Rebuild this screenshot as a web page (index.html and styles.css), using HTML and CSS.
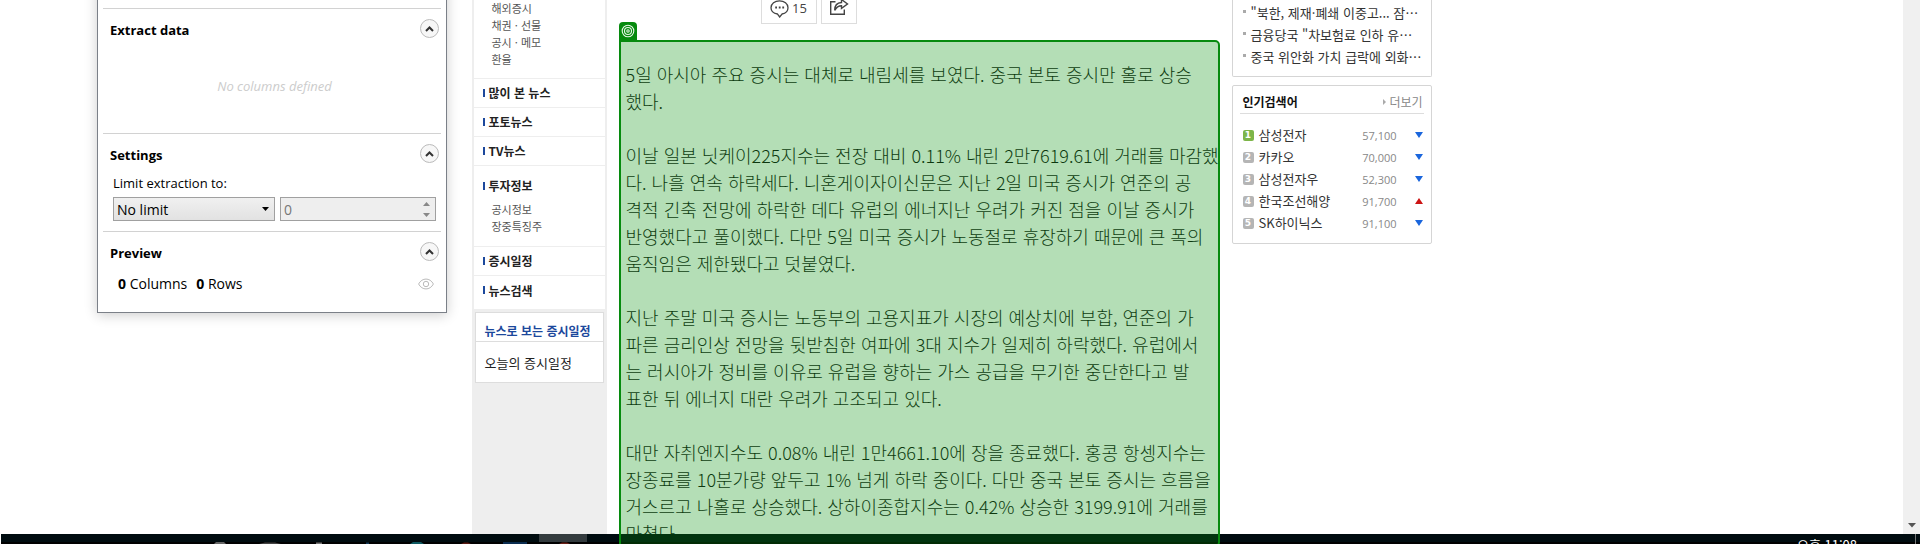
FILE: index.html
```html
<!DOCTYPE html>
<html lang="ko">
<head>
<meta charset="utf-8">
<title>증시 뉴스</title>
<link rel="stylesheet" href="styles.css">
</head>
<body>
<div class="desktop">
  <main class="browser">
    <div class="page">
      <nav class="side">
        <div class="menu">
          <ul class="sub first">
            <li><a href="#">해외증시</a></li>
            <li><a href="#">채권 · 선물</a></li>
            <li><a href="#">공시 · 메모</a></li>
            <li><a href="#">환율</a></li>
          </ul>
          <a class="head" href="#">많이 본 뉴스</a>
          <a class="head" href="#">포토뉴스</a>
          <a class="head" href="#">TV뉴스</a>
          <div class="group">
            <a class="head" href="#">투자정보</a>
            <ul class="sub">
              <li><a href="#">공시정보</a></li>
              <li><a href="#">장중특징주</a></li>
            </ul>
          </div>
          <a class="head" href="#">증시일정</a>
          <a class="head last" href="#">뉴스검색</a>
        </div>
        <section class="schedule">
          <h2>뉴스로 보는 증시일정</h2>
          <a href="#">오늘의 증시일정</a>
        </section>
      </nav>

      <div class="center">
        <div class="tools">
          <button class="tool comment" type="button" aria-label="댓글 15">
            <svg width="20" height="18" viewBox="0 0 20 18" fill="none" stroke="#444" stroke-width="1.3"><path d="M7.5 14 C3.500 13.300 1 11 1 7.700 C1 3.800 4.800 .8 9.500 .8 C14.200 .8 18 3.800 18 7.700 C18 11 15.500 13.300 12 14 L9.700 17 Z"/><path d="M5.200 7.500h1.800M8.800 7.500h1.800M12.300 7.500h1.800" stroke-width="1.800"/></svg>
            <span>15</span>
          </button>
          <button class="tool share" type="button" aria-label="공유">
            <svg width="20" height="19" viewBox="0 0 20 19" fill="none" stroke="#444" stroke-width="1.400"><path d="M6.500 4.700H1.700V17.300H15.300V12.500"/><path d="M5.700 13.300C5.700 8.500 8.200 5.700 12.500 5.500V2.500L18.500 7L12.500 11.300V8.700C9.500 8.700 7.500 10 5.700 13.300Z"/></svg>
          </button>
        </div>
        <article class="article">
          <p>5일 아시아 주요 증시는 대체로 내림세를 보였다. 중국 본토 증시만 홀로 상승<br>했다.</p>
          <p>이날 일본 닛케이225지수는 전장 대비 0.11% 내린 2만7619.61에 거래를 마감했<br>다. 나흘 연속 하락세다. 니혼게이자이신문은 지난 2일 미국 증시가 연준의 공<br>격적 긴축 전망에 하락한 데다 유럽의 에너지난 우려가 커진 점을 이날 증시가<br>반영했다고 풀이했다. 다만 5일 미국 증시가 노동절로 휴장하기 때문에 큰 폭의<br>움직임은 제한됐다고 덧붙였다.</p>
          <p>지난 주말 미국 증시는 노동부의 고용지표가 시장의 예상치에 부합, 연준의 가<br>파른 금리인상 전망을 뒷받침한 여파에 3대 지수가 일제히 하락했다. 유럽에서<br>는 러시아가 정비를 이유로 유럽을 향하는 가스 공급을 무기한 중단한다고 발<br>표한 뒤 에너지 대란 우려가 고조되고 있다.</p>
          <p>대만 자취엔지수도 0.08% 내린 1만4661.10에 장을 종료했다. 홍콩 항셍지수는<br>장종료를 10분가량 앞두고 1% 넘게 하락 중이다. 다만 중국 본토 증시는 흐름을<br>거스르고 나홀로 상승했다. 상하이종합지수는 0.42% 상승한 3199.91에 거래를<br>마쳤다.</p>
          <div class="highlight">
            <span class="tag"><svg width="14" height="14" viewBox="0 0 14 14" fill="none" stroke="#e8f6e8" stroke-width="1.100"><circle cx="7" cy="7" r="5.800"/><circle cx="7" cy="7" r="3.500"/><circle cx="7" cy="7" r="1.200"/></svg></span>
          </div>
        </article>
      </div>

      <aside class="right">
        <ul class="box news">
          <li><a href="#">"북한, 제재·폐쇄 이중고... 잠…</a></li>
          <li><a href="#">금융당국 "차보험료 인하 유…</a></li>
          <li><a href="#">중국 위안화 가치 급락에 외화…</a></li>
        </ul>
        <section class="box rank">
          <header><h2>인기검색어</h2><a href="#">더보기</a></header>
          <table>
            <tr><td><span class="no top">1</span></td><td class="name">삼성전자</td><td class="price">57,100</td><td><i class="down"></i></td></tr>
            <tr><td><span class="no">2</span></td><td class="name">카카오</td><td class="price">70,000</td><td><i class="down"></i></td></tr>
            <tr><td><span class="no">3</span></td><td class="name">삼성전자우</td><td class="price">52,300</td><td><i class="down"></i></td></tr>
            <tr><td><span class="no">4</span></td><td class="name">한국조선해양</td><td class="price">91,700</td><td><i class="up"></i></td></tr>
            <tr><td><span class="no">5</span></td><td class="name">SK하이닉스</td><td class="price">91,100</td><td><i class="down"></i></td></tr>
          </table>
        </section>
      </aside>
    </div>
    <div class="scrollbar"><svg width="8" height="5" viewBox="0 0 8 5"><path d="M0 0H8L4 4.500Z" fill="#555"/></svg></div>
  </main>

  <section class="dialog">
    <div class="panel extract">
      <header><h2>Extract data</h2><button class="fold" type="button" aria-label="Collapse Extract data"><svg width="9" height="6" viewBox="0 0 9 6"><path d="M1 5L4.500 1.500L8 5" fill="none" stroke="#333" stroke-width="2"/></svg></button></header>
      <p class="empty">No columns defined</p>
    </div>
    <div class="panel settings">
      <header><h2>Settings</h2><button class="fold" type="button" aria-label="Collapse Settings"><svg width="9" height="6" viewBox="0 0 9 6"><path d="M1 5L4.500 1.500L8 5" fill="none" stroke="#333" stroke-width="2"/></svg></button></header>
      <label for="limit">Limit extraction to:</label>
      <div class="fields">
        <div class="select"><select id="limit"><option>No limit</option></select><svg width="7" height="4" viewBox="0 0 7 4"><path d="M0 0H7L3.500 4Z" fill="#000"/></svg></div>
        <div class="spin"><input type="text" value="0" aria-label="Limit value" disabled><svg width="7" height="15" viewBox="0 0 7 15" fill="#888"><path d="M0 4L3.500 0L7 4ZM0 11H7L3.500 15Z"/></svg></div>
      </div>
    </div>
    <div class="panel preview">
      <header><h2>Preview</h2><button class="fold" type="button" aria-label="Collapse Preview"><svg width="9" height="6" viewBox="0 0 9 6"><path d="M1 5L4.500 1.500L8 5" fill="none" stroke="#333" stroke-width="2"/></svg></button></header>
      <div class="counts"><span><b>0</b> Columns</span><span><b>0</b> Rows</span>
        <svg class="eye" width="16" height="12" viewBox="0 0 16 12" fill="none" stroke="#bbb"><path d="M.6 6C4-.6 12-.6 15.400 6C12 12.600 4 12.600 .6 6Z"/><circle cx="8" cy="6" r="2.700"/></svg>
      </div>
    </div>
  </section>

  <footer class="taskbar">
    <svg class="apps" width="620" height="10" viewBox="0 0 620 10">
      <path d="M538 0H586V8H538Z" fill="#333b3e"/>
      <path d="M213 10L215 8H223L225 10Z" fill="#666"/>
      <path d="M258 10L264 8.500H274L280 10Z" fill="#444"/>
      <path d="M315 10V8.500H321V10Z" fill="#777"/>
      <path d="M365 10V8.500H368V10Z" fill="#123a5a"/>
      <path d="M409 10L412 8H420L423 10Z" fill="#0e5a62"/>
      <path d="M460 10L463 8.500H467L470 10Z" fill="#5a1a14"/>
      <path d="M502 8H526V10H502Z" fill="#0a2c50"/>
      <path d="M558 10L561 8.500H566L569 10Z" fill="#6a2018"/>
    </svg>
    <time>오후 11:08</time>
  </footer>
</div>
</body>
</html>
```
FILE: styles.css
```css
* { box-sizing: border-box; }
body {
  margin: 0;
  background: #fff;
  font-family: "Liberation Sans", "Noto Sans CJK KR", sans-serif;
}
h2, p, ul { margin: 0; padding: 0; }
ul { list-style: none; }
a { color: inherit; text-decoration: none; }
button { padding: 0; font: inherit; cursor: pointer; }
svg { display: block; flex: none; }

.desktop { position: relative; height: 100vh; overflow: hidden; }
.browser { display: flex; height: 100%; padding-bottom: 10px; }
.page {
  display: grid;
  grid-template-columns: 135px 601px 200px;
  column-gap: 12px;
  width: 960px;
  margin: 0 auto;
}
.scrollbar {
  display: flex;
  align-items: flex-end;
  justify-content: center;
  width: 17px;
  padding-bottom: 6px;
  background: #f0f0f0;
}

/* left menu */
.side {
  padding: 0 2px;
  background: #eee;
  color: #222;
  font-family: "Noto Sans CJK KR", sans-serif;
}
.menu { background: #fff; }
.sub { padding: 0 0 11px 18px; color: #555; font-size: 11px; line-height: 17px; }
.sub.first { padding-bottom: 10px; }
.head {
  display: flex;
  align-items: center;
  gap: 4px;
  height: 29px;
  padding: 0 0 1px 9px;
  border-top: 1px solid #eee;
  font-size: 12px;
  font-weight: 700;
}
.head::before { content: ""; width: 2px; height: 8px; background: #1c489c; }
.head.last { height: 34px; padding-bottom: 5px; }
.group { border-top: 1px solid #eee; padding-top: 5px; }
.group .head { height: 30px; border-top: 0; }
.schedule {
  margin: 3px 1px 0;
  border: 1px solid #ddd;
  background: #fff;
  font-size: 12px;
}
.schedule h2 {
  padding: 7px 9px 0;
  border-bottom: 1px solid #ddd;
  color: #1c489c;
  font-size: 12px;
  line-height: 21px;
  white-space: nowrap;
}
.schedule a { display: block; padding: 2px 9px 0; font-size: 13px; line-height: 38px; }

/* article */
.tools { display: flex; gap: 4px; height: 24px; margin-left: 142px; }
.tool {
  display: flex;
  justify-content: center;
  gap: 2px;
  height: 24px;
  border: 1px solid #ddd;
  border-top: 0;
  background: #fff;
  color: #444;
  font-family: "Open Sans", sans-serif;
  font-size: 13px;
  line-height: 16px;
}
.tool.comment { width: 56px; }
.tool.share { width: 36px; }
.tool.share svg { margin-top: -3px; }
.article {
  position: relative;
  margin-top: 16px;
  padding: 21px 7px 0;
  color: #111;
  font-family: "Liberation Sans Narrow", "Noto Sans CJK KR", sans-serif;
  font-size: 18px;
  font-weight: 300;
  line-height: 27px;
  white-space: nowrap;
}
.article p { margin-bottom: 27px; }
.highlight {
  position: absolute;
  inset: 0;
  z-index: 3;
  border: 2px solid #068a0e;
  border-radius: 0 5px 5px 0;
  background: rgba(5, 145, 12, .3);
}
.tag {
  position: absolute;
  left: -2px;
  top: -20px;
  display: grid;
  place-items: center;
  width: 18px;
  height: 18px;
  border-radius: 4px 4px 0 0;
  background: #068a0e;
}

/* right column */
.box { border: 1px solid #d5d5d5; border-radius: 2px; background: #fff; }
.right { color: #333; font-family: "Noto Sans CJK KR", sans-serif; font-size: 13px; }
.news { height: 77px; border-top: 0; border-radius: 0 0 2px 2px; padding: 2px 8px 0 10px; white-space: nowrap; }
.news li { display: flex; gap: 5px; line-height: 22px; }
.news li::before { content: ""; width: 3px; height: 3px; margin-top: 8px; background: #aaa; }
.rank { margin-top: 8px; padding: 0 7px 9px; }
.rank header {
  display: flex;
  align-items: center;
  justify-content: space-between;
  height: 28px;
  padding: 4px 1px 0 3px;
  border-bottom: 1px solid #ddd;
}
.rank h2 { color: #111; font-size: 12px; }
.rank header a { display: flex; align-items: center; gap: 3px; color: #888; font-size: 12px; }
.rank header a::before { content: ""; border: 3px solid transparent; border-left-color: #aaa; border-right: 0; }
.rank table { width: 100%; margin-top: 10px; border-collapse: collapse; }
.rank td { height: 22px; padding: 0; line-height: 20px; vertical-align: middle; }
.rank td:first-child { width: 19px; padding-left: 3px; }
.rank td:last-child { width: 27px; padding-left: 18px; }
.rank .price { padding-top: 2px; color: #888; font-family: "Open Sans", sans-serif; font-size: 11px; text-align: right; }
.no {
  display: block;
  width: 11px;
  height: 11px;
  border-radius: 2px;
  background: #b5b5b5;
  color: #fff;
  font: 700 9px/11px "DejaVu Sans", sans-serif;
  text-align: center;
}
.no.top { background: #7db548; }
.down, .up { display: block; width: 7px; border: 3px solid transparent; border-width: 0 4px; }
.down { border-top: 6px solid #1a66dd; }
.up { border-bottom: 6px solid #cc1414; }

/* extraction dialog */
.dialog {
  position: absolute;
  left: 97px;
  top: -20px;
  z-index: 2;
  width: 350px;
  padding: 27px 5px 0;
  border: 1px solid #7b8088;
  background: #fff;
  box-shadow: 0 2px 12px rgba(0, 0, 0, .2);
  color: #000;
  font-family: "Open Sans", sans-serif;
  font-size: 14px;
}
.panel { padding: 10px 2px 0 7px; border-top: 1px solid #d2d2d2; }
.panel header { display: flex; justify-content: space-between; align-items: flex-start; height: 22px; }
.panel h2 { padding-top: 1px; font-size: 13px; line-height: 20px; }
.fold {
  display: grid;
  place-items: center;
  width: 19px;
  height: 19px;
  border: 1px solid #bbb;
  border-radius: 50%;
  background: #f7f7f7;
}
.extract { height: 125px; }
.empty { padding-top: 35px; color: #ccc; font-size: 13px; font-style: italic; line-height: 20px; text-align: center; }
.settings { height: 98px; }
.settings label { display: block; padding: 7px 3px 0; font-size: 13px; line-height: 20px; }
.fields { display: flex; gap: 5px; padding: 4px 3px 0; }
.select, .spin { display: flex; align-items: center; flex: 162px; min-width: 0; height: 24px; padding-right: 5px; border: 1px solid #a0a0a0; }
.spin { flex-basis: 156px; background: #eee; }
.select { background: linear-gradient(#f0f0f0, #e2e2e2); }
.select select, .spin input {
  flex: 1;
  min-width: 0;
  padding: 0 3px;
  border: 0;
  background: none;
  color: #000;
  font: inherit;
  appearance: none;
}
.spin input { color: #777; }
.preview { height: 81px; }
.counts { display: flex; align-items: center; gap: 9px; padding: 9px 5px 0 8px; line-height: 22px; }
.eye { margin-left: auto; }

/* taskbar */
.taskbar {
  position: absolute;
  inset: auto 0 0 1px;
  z-index: 1;
  display: flex;
  justify-content: space-between;
  height: 10px;
  overflow: hidden;
  background: linear-gradient(#000c10 8px, #000 8px);
}
.taskbar time {
  margin-right: 4px;
  padding: 3px 58px 0 0;
  border-right: 1px solid #777;
  color: #fff;
  font-family: "Noto Sans CJK KR", sans-serif;
  font-size: 13px;
  line-height: 16px;
}
```
